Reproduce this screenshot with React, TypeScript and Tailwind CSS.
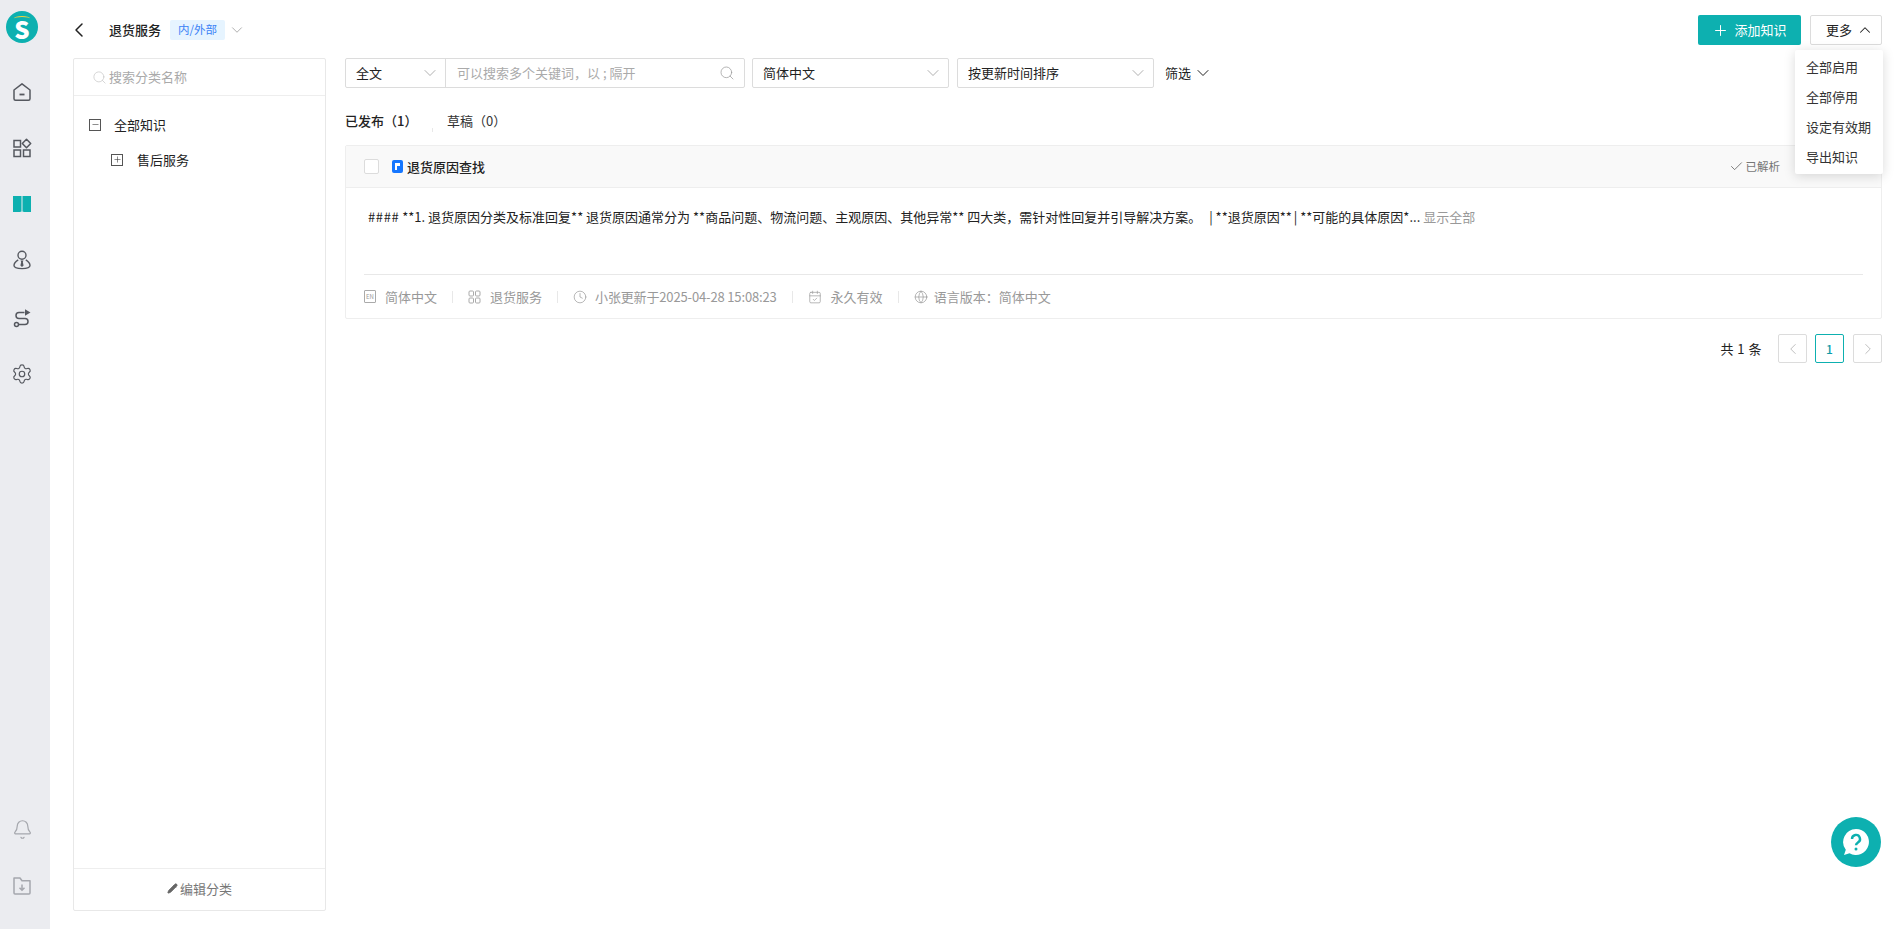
import { Check, ChevronDown, ChevronLeft, ChevronRight, ChevronUp, Plus, Search, Clock, CalendarCheck, Globe, Minus, Settings, Bell, Pencil } from "lucide-react";

const font = { fontFamily: '"Noto Sans CJK SC", "Noto Sans", sans-serif' };

function HomeIcon() {
  return (
    <svg width="20" height="20" viewBox="0 0 20 20" fill="none" stroke="#55585f" strokeWidth="1.5">
      <path d="M2 8 10 1.800 18 8v8.700a1.500 1.500 0 0 1-1.500 1.500h-13A1.500 1.500 0 0 1 2 16.700z" strokeLinejoin="round" />
      <path d="M7.500 12.500h5" strokeWidth="1.800" />
    </svg>
  );
}

function AppsIcon() {
  return (
    <svg width="20" height="20" viewBox="0 0 20 20" fill="none" stroke="#55585f" strokeWidth="1.5">
      <rect x="2" y="2.500" width="6.500" height="6.500" />
      <path d="m14.500 1.200 4.200 4.300-4.200 4.300-4.200-4.300z" strokeLinejoin="round" />
      <rect x="2" y="12" width="6.500" height="6.500" />
      <rect x="11.500" y="12" width="6.500" height="6.500" />
    </svg>
  );
}

function BookIcon() {
  return (
    <svg width="20" height="20" viewBox="0 0 20 20" fill="#0db0b0">
      <path d="M1 2h8.500v16L9 17.300 8.500 18H1z" />
      <path d="M10.500 2H19v16h-7.500l-.5-.7-.5.7z" />
    </svg>
  );
}

function AgentIcon() {
  return (
    <svg width="20" height="20" viewBox="0 0 20 20" fill="none" stroke="#55585f" strokeWidth="1.4">
      <circle cx="10" cy="5.300" r="4" />
      <path d="M6.200 9.800C3.700 11.300 2 13.300 2 15.600c0 2 3.600 3 8 3s8-1 8-3c0-2.300-1.700-4.300-4.200-5.800" />
      <path d="M8.500 10.500h3L10.800 12l.8 3.500L10 17l-1.600-1.500.8-3.500z" fill="#55585f" stroke="none" />
    </svg>
  );
}

function RouteIcon() {
  return (
    <svg width="20" height="20" viewBox="0 0 20 20" fill="none" stroke="#55585f" strokeWidth="1.5" className="mt-[2px]">
      <path d="M12.500 4.500H7a3 3 0 0 0 0 6h6a3 3 0 0 1 0 6H6.500" />
      <circle cx="4.500" cy="16.500" r="2" />
      <path d="M13 1.200 18.500 4.500 13 7.800z" fill="#55585f" stroke="none" />
    </svg>
  );
}

function FolderDownIcon() {
  return (
    <svg width="20" height="20" viewBox="0 0 20 20" fill="none" stroke="#a5a7ad" strokeWidth="1.5">
      <path d="M2 2h6l2 2.800h8v12.200a1 1 0 0 1-1 1H3a1 1 0 0 1-1-1z" strokeLinejoin="round" />
      <path d="M10 8.500v5.500M7.500 11.800 10 14.200l2.500-2.400" />
    </svg>
  );
}

function TreeBox({ open }: { open?: boolean }) {
  return (
    <span className="flex h-[12px] w-[12px] items-center justify-center border border-[#555]">
      {open ? <Minus size={9} strokeWidth={1.5} color="#333" /> : <Plus size={9} strokeWidth={1.5} color="#333" />}
    </span>
  );
}

function SelectBox({ label, className }: { label: string; className: string }) {
  return (
    <div className={`flex h-[30px] items-center justify-between rounded-[2px] border border-[#dcdcdc] pl-[10px] pr-[5px] text-[13px] text-[#222] ${className}`}>
      <span>{label}</span>
      <ChevronDown size={20} strokeWidth={0.8} color="#888" />
    </div>
  );
}

function Meta({ icon, text, className }: { icon: React.ReactNode; text: string; className?: string }) {
  return (
    <span className="flex items-center gap-[9px]">
      {icon}
      <span className={className}>{text}</span>
    </span>
  );
}

function MetaSep() {
  return <span className="mx-[15px] h-[12px] w-px bg-[#e8e8e8]" />;
}

export default function App() {
  return (
    <div className="flex h-[929px] w-[1897px] overflow-hidden bg-white text-[13px] text-[#222]" style={font}>
      <aside className="flex w-[50px] shrink-0 flex-col items-center bg-[#ebecf0] pr-[6px] pt-[11px] pb-[33px]">
        <div className="relative flex h-[32px] w-[32px] items-center justify-center rounded-full bg-[#0db0b0] pt-[3px] text-[24px] font-black leading-none text-white">
          S
          <span className="absolute left-[8px] top-[5px] h-[5px] w-[16px] rounded-[50%] border-t-[1.5px] border-[#f3d13c]" />
        </div>
        <div className="mt-[39px] flex flex-col items-center gap-[36px]">
          <HomeIcon />
          <AppsIcon />
          <BookIcon />
          <AgentIcon />
          <RouteIcon />
          <Settings size={22} strokeWidth={1.3} color="#55585f" className="-my-px" />
        </div>
        <div className="mt-auto flex flex-col items-center gap-[37px]">
          <Bell size={21} strokeWidth={1.4} color="#a5a7ad" className="-my-px" />
          <FolderDownIcon />
        </div>
      </aside>

      <main className="relative flex min-w-0 flex-1 flex-col pl-[23px] pr-[15px] pt-[15px]">
        <header className="flex h-[30px] shrink-0 items-center">
          <ChevronLeft size={24} strokeWidth={1.5} color="#222" className="ml-[-6px]" />
          <span className="ml-[18px] font-medium">退货服务</span>
          <span className="ml-[9px] rounded-[2px] bg-[#e6f4ff] px-[8px] py-[1px] text-[11.500px] text-[#3b82f6]">内/外部</span>
          <ChevronDown size={18} strokeWidth={0.9} color="#888" className="ml-[3px]" />
          <button className="ml-auto flex h-[30px] w-[103px] items-center justify-center gap-[5px] rounded-[2px] bg-[#0db0b0] text-white">
            <Plus size={17} strokeWidth={1.4} />
            添加知识
          </button>
          <button className="ml-[9px] flex h-[30px] w-[72px] items-center justify-center gap-[4px] rounded-[2px] border border-[#dcdcdc] pl-[8px]">
            更多
            <ChevronUp size={18} strokeWidth={1.4} />
          </button>
        </header>

        <div className="mt-[13px] flex min-h-0 flex-1 pb-[18px]">
          <section className="flex w-[253px] shrink-0 flex-col rounded-[2px] border border-[#e8e8e8]">
            <div className="flex h-[37px] shrink-0 items-center gap-[2px] border-b border-[#eee] pl-[18px] text-[#aaa]">
              <Search size={15} strokeWidth={1.1} color="#c4c4c4" />
              搜索分类名称
            </div>
            <div className="flex-1 pt-[11px]">
              <div className="flex h-[35px] items-center gap-[13px] pl-[15px]">
                <TreeBox open />
                <span>全部知识</span>
              </div>
              <div className="flex h-[35px] items-center gap-[14px] pl-[37px]">
                <TreeBox />
                <span>售后服务</span>
              </div>
            </div>
            <div className="flex h-[42px] shrink-0 items-center justify-center gap-[2px] border-t border-[#eee] pb-[2px] text-[#777]">
              <Pencil size={11} fill="#666" color="#666" />
              编辑分类
            </div>
          </section>

          <section className="ml-[19px] flex min-w-0 flex-1 flex-col">
            <div className="flex h-[30px] items-center">
              <div className="flex h-[30px] w-[400px] items-center rounded-[2px] border border-[#dcdcdc]">
                <div className="flex h-full w-[100px] items-center justify-between border-r border-[#dcdcdc] pl-[10px] pr-[5px] text-[#222]">
                  全文
                  <ChevronDown size={20} strokeWidth={0.8} color="#888" />
                </div>
                <span className="ml-[11px] text-[#aaa]">可以搜索多个关键词，以 ; 隔开</span>
                <Search size={16} strokeWidth={1.1} color="#999" className="ml-auto mr-[9px]" />
              </div>
              <SelectBox label="简体中文" className="ml-[7px] w-[197px]" />
              <SelectBox label="按更新时间排序" className="ml-[8px] w-[197px]" />
              <span className="ml-[11px]">筛选</span>
              <ChevronDown size={20} strokeWidth={1.2} className="ml-[2px]" />
            </div>

            <div className="mt-[22px] flex h-[22px] items-center">
              <span className="w-[87px] font-medium">已发布（1）</span>
              <span className="h-[4px] w-px self-end bg-[#e8e8e8]" />
              <span className="ml-[14px] text-[#333]">草稿（0）</span>
            </div>

            <article className="mt-[13px] rounded-[2px] border border-[#eee]">
              <div className="flex h-[42px] items-center border-b border-[#eee] bg-[#f9f9f9] pl-[18px] pr-[101px]">
                <span className="h-[15px] w-[15px] rounded-[2px] border border-[#dcdcdc] bg-white" />
                <svg width="11" height="13" viewBox="0 0 11 13" className="ml-[13px]">
                  <rect width="11" height="13" rx="2" fill="#1677ff" />
                  <path d="M3 3h5v3H5v4H3z" fill="#fff" />
                </svg>
                <span className="ml-[4px] font-medium">退货原因查找</span>
                <span className="ml-auto flex items-center gap-[2px] text-[11.500px] text-[#777]">
                  <Check size={15} strokeWidth={1.2} color="#555" />
                  已解析
                </span>
              </div>
              <div className="px-[18px]">
                <p className="mt-[19px] h-[67px] pl-[4px] text-[#222]">
                  <span className="tracking-[0.6px]">####</span> **1. 退货原因分类及标准回复** 退货原因通常分为 **商品问题、物流问题、主观原因、其他异常** 四大类，需针对性回复并引导解决方案。 <span className="ml-[5px]">|</span> **退货原因** <span className="-ml-px">|</span> **可能的具体原因*... <span className="text-[#999]">显示全部</span>
                </p>
                <div className="flex h-[44px] items-center border-t border-[#e8e8e8] text-[#999]">
                  <Meta
                    icon={
                      <span className="flex h-[13px] w-[12px] items-center justify-center rounded-[1px] border border-[#aaa] text-[6px] leading-none">EN</span>
                    }
                    text="简体中文"
                  />
                  <MetaSep />
                  <Meta
                    icon={
                      <svg width="13" height="14" viewBox="0 0 13 14" fill="none" stroke="#aaa" strokeWidth="1">
                        <rect x="1" y="1" width="4.500" height="5" rx="1" />
                        <rect x="7.500" y="1" width="4.500" height="5" rx="1" />
                        <rect x="1" y="8" width="4.500" height="5" rx="1" />
                        <rect x="7.500" y="8" width="4.500" height="5" rx="1" />
                      </svg>
                    }
                    text="退货服务"
                  />
                  <MetaSep />
                  <span className="flex items-center gap-[8px]">
                    <Clock size={14} strokeWidth={1.2} color="#999" />
                    <span className="tracking-[-0.15px]">小张更新于2025-04-28 15:08:23</span>
                  </span>
                  <MetaSep />
                  <Meta icon={<CalendarCheck size={14} strokeWidth={1.2} color="#999" />} text="永久有效" />
                  <MetaSep />
                  <span className="flex items-center gap-[6px]">
                    <Globe size={14} strokeWidth={1.2} color="#999" />
                    <span>语言版本：简体中文</span>
                  </span>
                </div>
              </div>
            </article>

            <div className="mt-[15px] flex items-center justify-end">
              <span className="tracking-[0.5px]">共 1 条</span>
              <span className="ml-[16px] flex h-[29px] w-[29px] items-center justify-center rounded-[2px] border border-[#dcdcdc]">
                <ChevronLeft size={18} strokeWidth={1} color="#aaa" />
              </span>
              <span className="ml-[8px] flex h-[29px] w-[29px] items-center justify-center rounded-[2px] border border-[#0db0b0] text-[12px] font-medium text-[#0d9ba8]">1</span>
              <span className="ml-[9px] flex h-[29px] w-[29px] items-center justify-center rounded-[2px] border border-[#dcdcdc]">
                <ChevronRight size={18} strokeWidth={1} color="#aaa" />
              </span>
            </div>
          </section>
        </div>

        <div className="absolute right-[14px] top-[50px] w-[88px] rounded-[2px] bg-white py-[2px] pl-[11px] text-[#333] shadow-[0_2px_12px_rgba(0,0,0,0.15)]">
          <div className="flex h-[30px] items-center">全部启用</div>
          <div className="flex h-[30px] items-center">全部停用</div>
          <div className="flex h-[30px] items-center">设定有效期</div>
          <div className="flex h-[30px] items-center">导出知识</div>
        </div>

        <div className="absolute bottom-[62px] right-[16px] flex h-[50px] w-[50px] items-center justify-center rounded-full bg-[#0db0b0]">
          <svg width="30" height="30" viewBox="0 0 30 30">
            <path d="M15 2a13 13 0 1 1-6.500 24.300L3 28l1.800-5.200A13 13 0 0 1 15 2z" fill="#fff" />
            <path d="M11 12a4 4 0 1 1 6 3.400c-1.300.8-2 1.500-2 2.800" fill="none" stroke="#0db0b0" strokeWidth="2.400" />
            <circle cx="15" cy="22" r="1.500" fill="#0db0b0" />
          </svg>
        </div>
      </main>
    </div>
  );
}
